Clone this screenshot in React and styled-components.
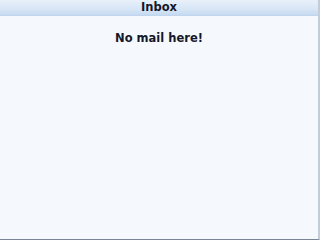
import styled, { createGlobalStyle } from 'styled-components';

const GlobalStyle = createGlobalStyle`
  html, body {
    margin: 0;
    padding: 0;
    width: 320px;
    height: 240px;
    overflow: hidden;
    background: #f3f7fc;
  }
`;

const Screen = styled.div`
  width: 320px;
  height: 240px;
  box-sizing: border-box;
  display: flex;
  flex-direction: column;
  background: #f5f9fd;
  border-right: 2px solid #c4ccd8;
  border-bottom: 1px solid #7a8494;
  font-family: 'DejaVu Sans', sans-serif;
  color: #15172a;
`;

const TitleBar = styled.header`
  height: 15px;
  flex: none;
  display: flex;
  align-items: center;
  justify-content: center;
  background: linear-gradient(#e8f0fa, #d8e6f6 60%, #c6daf0);
  border-bottom: 1px solid #c0d5ee;
  font-size: 11.5px;
  font-weight: bold;
  line-height: 1;
`;

const Message = styled.p`
  margin: 15px 0 0;
  text-align: center;
  font-size: 11.5px;
  font-weight: bold;
`;

export default function App() {
  return (
    <>
      <GlobalStyle />
      <Screen>
        <TitleBar>Inbox</TitleBar>
        <Message>No mail here!</Message>
      </Screen>
    </>
  );
}
